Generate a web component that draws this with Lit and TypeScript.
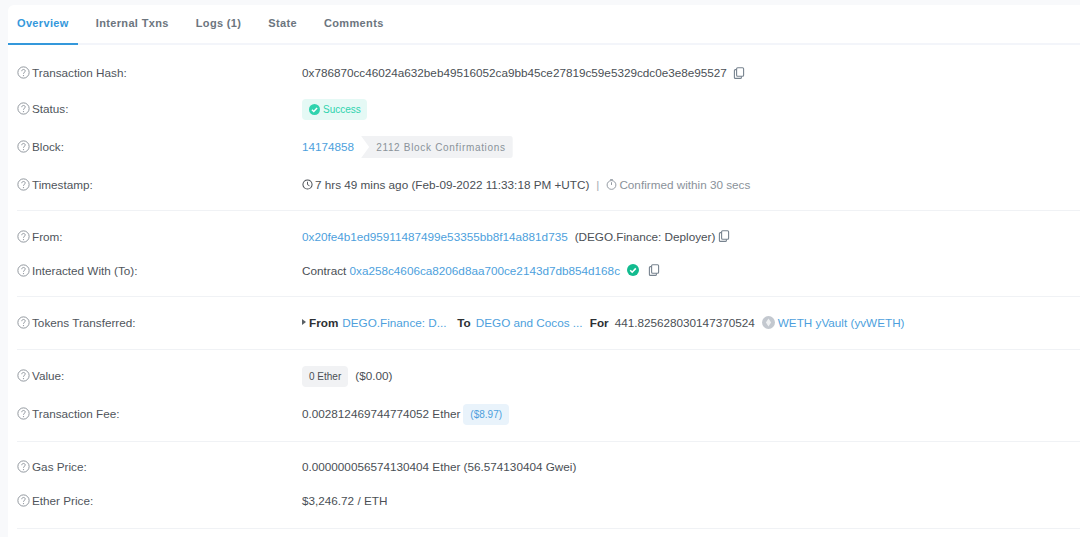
import { LitElement, html, css, svg } from "lit";
import { customElement } from "lit/decorators.js";

const help = html`<svg class="help" viewBox="0 0 12 12"><circle cx="6" cy="6" r="5.2" fill="none" stroke="#8f959c" stroke-width=".9"/><path d="M4.4 4.8c0-1 .7-1.6 1.6-1.6s1.6.6 1.6 1.4c0 1.2-1.6 1.2-1.6 2.6" fill="none" stroke="#8f959c" stroke-width=".9"/><circle cx="6" cy="8.8" r=".6" fill="#8f959c"/></svg>`;
const copy = html`<svg class="copy" viewBox="0 0 12 12"><rect x="3.6" y=".7" width="7" height="8.6" rx="1" fill="none" stroke="#77838f" stroke-width="1.1"/><path d="M3.6 2.6H2.4a1 1 0 0 0-1 1v6.8a1 1 0 0 0 1 1h5a1 1 0 0 0 1-1V9.3" fill="none" stroke="#77838f" stroke-width="1.1"/></svg>`;
const check = svg`<circle cx="6" cy="6" r="6" fill="currentColor"/><path d="M3.2 6.2l2 2 3.6-3.8" fill="none" stroke="#fff" stroke-width="1.6"/>`;

@customElement("app-root")
export class AppRoot extends LitElement {
  static styles = css`
    :host { display: block; height: 537px; overflow: hidden; background: #f8f9fb; padding: 5px 0 0 8px; box-sizing: border-box;
      font-family: "Liberation Sans", Arial, sans-serif; font-size: 11.72px; color: #4a4f55; }
    .card { background: #fff; border-radius: 6px 0 0 0; height: 560px; }
    .tabs { display: flex; border-bottom: 2px solid #f3f5fa; height: 37px; padding-top: 1px; }
    .tab { font-weight: 700; font-size: 11px; letter-spacing: .35px; color: #6c757e; padding: 0 9px 3px; margin-right: 9px; display: flex; align-items: center; position: relative; height: 34px; }
    .tab.on { color: #3498db; }
    .tab.on::after { content: ""; position: absolute; left: 0; right: 0; bottom: -2px; height: 2px; background: #3498db; }
    .body { padding: 0 0 0 9px; }
    .sec { border-bottom: 1px solid #f0f2f5; }
    .row { display: grid; grid-template-columns: 285px 1fr; align-items: center; box-sizing: border-box; }
    .h35 { height: 35px; padding-top: 2px; } .h38 { height: 38px; } .h34 { height: 34px; }
    .s1 { padding-top: 10px; padding-bottom: 6px; }
    .s2 { padding-top: 9px; padding-bottom: 8px; }
    .s3 { padding-top: 9px; padding-bottom: 9px; }
    .s4 { padding-top: 7px; padding-bottom: 8px; }
    .s5 { padding-top: 8px; padding-bottom: 10px; }
    .label { display: flex; align-items: center; gap: 2px; color: #4f555c; padding-bottom: 2px; }
    .help { width: 13px; height: 13px; flex: none; }
    .copy { width: 12px; height: 12px; flex: none; }
    .val { display: flex; align-items: center; white-space: nowrap; color: #4a4f55; padding-bottom: 2px; }
    a { color: #4d9fdd; text-decoration: none; }
    .ok { display: inline-flex; align-items: center; gap: 3px; height: 21px; padding: 0 6px 0 7px; margin-top: 2px; border-radius: 4px; background: #e5f9f5; color: #2fd3ae; font-size: 10px; }
    .ok svg { width: 11px; height: 11px; }
    .verified { color: #12bb8f; margin-left: 7px; width: 12px; height: 12px; }
    .conf { display: inline-flex; align-items: center; height: 22px; padding: 0 7px 0 15px; margin: 2px 0 0 7px; background: #f1f2f4; border-radius: 0 3px 3px 0; color: #8a929a; font-size: 10px; letter-spacing: .68px; clip-path: polygon(0 0, 100% 0, 100% 100%, 0 100%, 8px 50%); }
    .clock { width: 11px; height: 11px; margin-right: 2px; }
    .muted { color: #8a929a; }
    .sep { color: #a6adb4; margin: 0 7px; }
    .caret { width: 0; height: 0; border-left: 4px solid #5a6066; border-top: 3px solid transparent; border-bottom: 3px solid transparent; margin-right: 3px; }
    b { color: #2c3034; }
    .from { margin-left: 4px; width: 106px; }
    .m-to { margin-left: 9px; }
    .to { margin-left: 5px; width: 107px; }
    .m-for { margin-left: 7px; }
    .amt { margin-left: 6px; }
    .token { width: 13px; height: 13px; margin: 0 3px 0 7px; flex: none; }
    .grey { display: inline-flex; align-items: center; height: 21px; padding: 0 7px; margin: 2px 7px 0 0; border-radius: 4px; background: #f1f2f4; font-size: 10px; }
    .blue { display: inline-flex; align-items: center; height: 21px; padding: 0 7px; margin: 2px 0 0 3px; border-radius: 4px; background: #e9f3fb; color: #4d9fdd; font-size: 10px; }
    .g6 { width: 6px; } .g9 { width: 9px; } .g3 { width: 3px; }
    .ml7 { margin-left: 7px; }
  `;

  row(label: string, cls: string, value: unknown) {
    return html`<div class="row ${cls}"><div class="label">${help}<span>${label}</span></div><div class="val">${value}</div></div>`;
  }

  render() {
    return html`<div class="card">
      <nav class="tabs">
        <div class="tab on">Overview</div><div class="tab">Internal Txns</div><div class="tab">Logs (1)</div><div class="tab">State</div><div class="tab">Comments</div>
      </nav>
      <div class="body">
        <section class="sec s1">
          ${this.row("Transaction Hash:", "h35", html`<span>0x786870cc46024a632beb49516052ca9bb45ce27819c59e5329cdc0e3e8e95527</span><span class="g6"></span>${copy}`)}
          ${this.row("Status:", "h38", html`<span class="ok"><svg viewBox="0 0 12 12">${check}</svg>Success</span>`)}
          ${this.row("Block:", "h38", html`<a>14174858</a><span class="conf">2112 Block Confirmations</span>`)}
          ${this.row("Timestamp:", "h38", html`<svg class="clock" viewBox="0 0 12 12"><circle cx="6" cy="6" r="5" fill="none" stroke="#4a4f55" stroke-width="1.1"/><path d="M6 3v3.2l2.2 1.2" fill="none" stroke="#4a4f55"/></svg>7 hrs 49 mins ago (Feb-09-2022 11:33:18 PM +UTC)<span class="sep">|</span><svg class="clock" viewBox="0 0 12 12"><circle cx="6" cy="6.5" r="4.8" fill="none" stroke="#8a929a"/><path d="M6 3.5v3M4.5.7h3" fill="none" stroke="#8a929a"/></svg><span class="muted">Confirmed within 30 secs</span>`)}
        </section>
        <section class="sec s2">
          ${this.row("From:", "h34", html`<a>0x20fe4b1ed95911487499e53355bb8f14a881d735</a><span class="ml7">(DEGO.Finance: Deployer)</span><span class="g3"></span>${copy}`)}
          ${this.row("Interacted With (To):", "h34", html`Contract&nbsp;<a>0xa258c4606ca8206d8aa700ce2143d7db854d168c</a><svg class="verified" viewBox="0 0 12 12">${check}</svg><span class="g9"></span>${copy}`)}
        </section>
        <section class="sec s3">
          ${this.row("Tokens Transferred:", "h34", html`<span class="caret"></span><b>From</b><a class="from">DEGO.Finance: D...</a><b class="m-to">To</b><a class="to">DEGO and Cocos ...</a><b class="m-for">For</b><span class="amt">441.825628030147370524</span><svg class="token" viewBox="0 0 13 13"><circle cx="6.5" cy="6.5" r="6.5" fill="#c3c8cf"/><path d="M6.5 2.5l2.6 4-2.6 4-2.6-4z" fill="#eef0f2"/></svg><a>WETH yVault (yvWETH)</a>`)}
        </section>
        <section class="sec s4">
          ${this.row("Value:", "h38", html`<span class="grey">0 Ether</span>($0.00)`)}
          ${this.row("Transaction Fee:", "h38", html`0.002812469744774052 Ether<span class="blue">($8.97)</span>`)}
        </section>
        <section class="sec s5">
          ${this.row("Gas Price:", "h34", html`0.000000056574130404 Ether (56.574130404 Gwei)`)}
          ${this.row("Ether Price:", "h34", html`$3,246.72 / ETH`)}
        </section>
      </div>
    </div>`;
  }
}
